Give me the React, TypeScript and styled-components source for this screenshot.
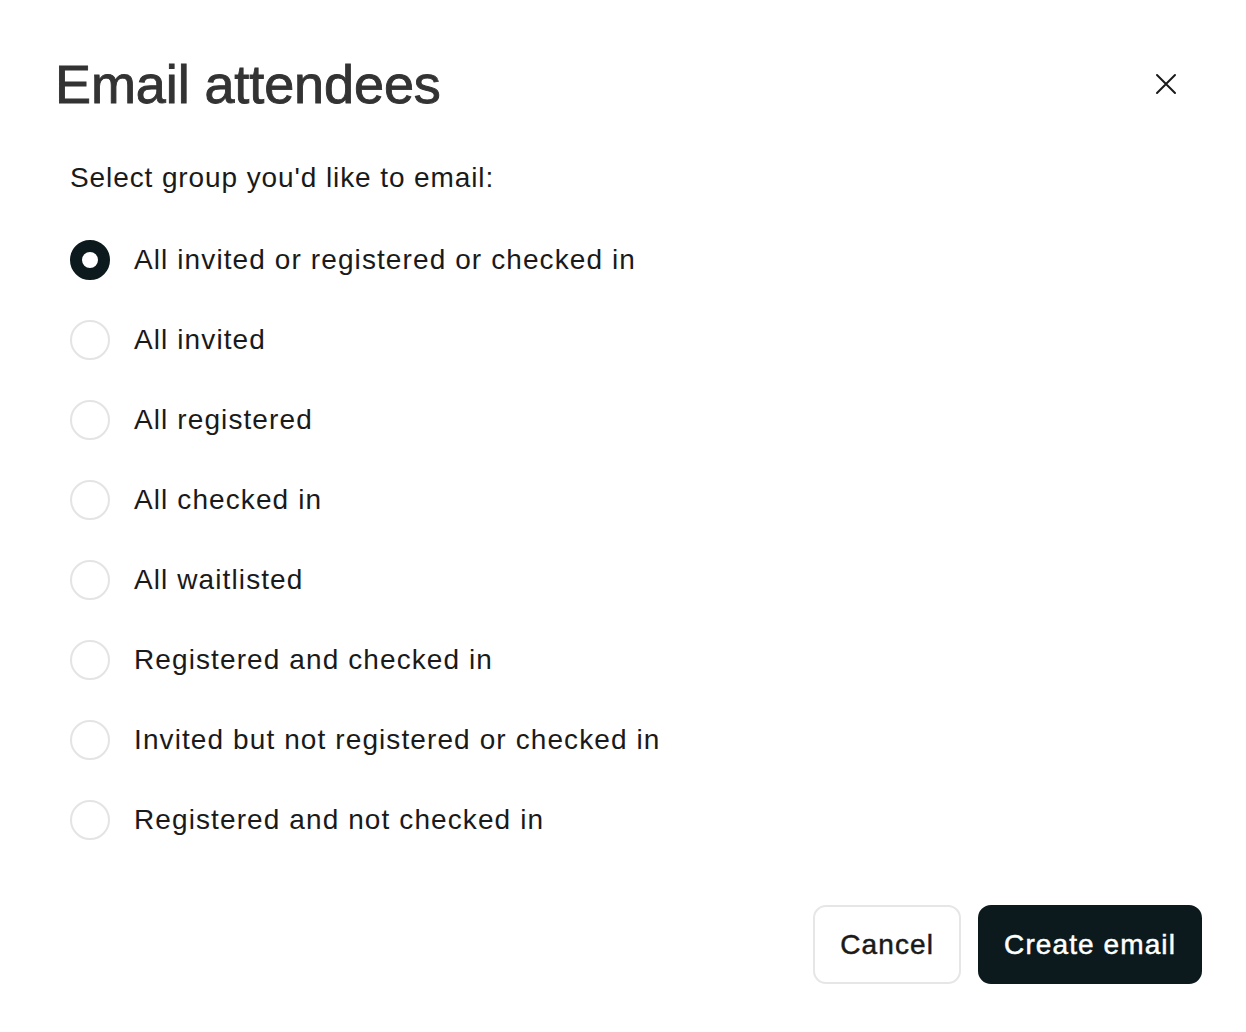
import { useState } from 'react'
import styled, { createGlobalStyle } from 'styled-components'

const GlobalStyle = createGlobalStyle`
  body {
    margin: 0;
    background: #fff;
    font-family: 'Liberation Sans', Arial, sans-serif;
    color: #1a1a1a;
  }
`

const Dialog = styled.div`
  width: 1246px;
  height: 1032px;
  box-sizing: border-box;
  padding: 52px 44px 48px 55px;
  display: flex;
  flex-direction: column;
`

const Header = styled.div`
  display: flex;
  align-items: center;
  justify-content: space-between;
  height: 64px;
`

const Title = styled.h1`
  margin: 0;
  font-size: 54px;
  font-weight: 400;
  letter-spacing: -0.1px;
  color: #333;
  -webkit-text-stroke: 0.9px #333;
`

const CloseButton = styled.button`
  border: 0;
  background: none;
  padding: 0;
  width: 24px;
  height: 24px;
  margin-right: 24px;
  display: flex;
  align-items: center;
  justify-content: center;
  cursor: pointer;
`

const Body = styled.div`
  padding-left: 15px;
  margin-top: 44px;
`

const Prompt = styled.p`
  margin: 0 0 44px;
  font-size: 28px;
  line-height: 36px;
  letter-spacing: 0.9px;
`

const OptionList = styled.div`
  display: flex;
  flex-direction: column;
  gap: 40px;
`

const Option = styled.label`
  display: flex;
  align-items: center;
  gap: 24px;
  height: 40px;
  font-size: 28px;
  letter-spacing: 1.1px;
  cursor: pointer;
`

const Radio = styled.span<{ $checked: boolean }>`
  width: 40px;
  height: 40px;
  box-sizing: border-box;
  border-radius: 50%;
  flex-shrink: 0;
  border: ${(p) => (p.$checked ? '12px solid #0c1a1d' : '2px solid #e4e4e4')};
  background: #fff;
`

const Footer = styled.div`
  margin-top: auto;
  display: flex;
  justify-content: flex-end;
  gap: 17px;
`

const Button = styled.button<{ $primary?: boolean }>`
  height: 79px;
  padding: 0 ${(p) => (p.$primary ? '24px' : '25px')};
  border-radius: 13px;
  font-family: inherit;
  font-size: 28px;
  font-weight: 400;
  letter-spacing: 1.1px;
  -webkit-text-stroke: 0.5px ${(p) => (p.$primary ? '#fff' : '#1a1a1a')};
  cursor: pointer;
  border: 2px solid ${(p) => (p.$primary ? '#0c1a1d' : '#e6e6e6')};
  background: ${(p) => (p.$primary ? '#0c1a1d' : '#fff')};
  color: ${(p) => (p.$primary ? '#fff' : '#1a1a1a')};
`

const groups = [
  'All invited or registered or checked in',
  'All invited',
  'All registered',
  'All checked in',
  'All waitlisted',
  'Registered and checked in',
  'Invited but not registered or checked in',
  'Registered and not checked in',
]

export default function App() {
  const [selected, setSelected] = useState(0)

  return (
    <>
      <GlobalStyle />
      <Dialog>
        <Header>
          <Title>Email attendees</Title>
          <CloseButton aria-label="Close">
            <svg width="22" height="22" viewBox="0 0 22 22">
              <path d="M2 2 L20 20 M20 2 L2 20" stroke="#1a1a1a" strokeWidth="2" strokeLinecap="round" />
            </svg>
          </CloseButton>
        </Header>
        <Body>
          <Prompt>Select group you'd like to email:</Prompt>
          <OptionList>
            {groups.map((g, i) => (
              <Option key={g} onClick={() => setSelected(i)}>
                <Radio $checked={selected === i} />
                {g}
              </Option>
            ))}
          </OptionList>
        </Body>
        <Footer>
          <Button>Cancel</Button>
          <Button $primary>Create email</Button>
        </Footer>
      </Dialog>
    </>
  )
}
